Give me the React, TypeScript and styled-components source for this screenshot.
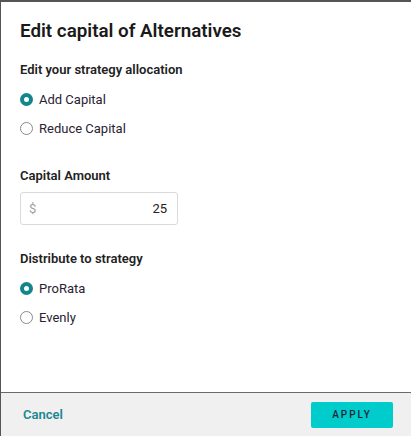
import React, { useState } from 'react';
import styled, { createGlobalStyle } from 'styled-components';

const GlobalStyle = createGlobalStyle`
  html, body {
    margin: 0;
    padding: 0;
    background: #555;
    font-family: Roboto, "Liberation Sans", Arial, sans-serif;
  }
  * {
    box-sizing: border-box;
  }
`;

const Dialog = styled.div`
  display: flex;
  flex-direction: column;
  margin: 2px 0 0 1px;
  height: calc(100vh - 2px);
  background: #fff;
`;

const Body = styled.div`
  flex: 1;
  padding: 18px 19px 0 19px;
`;

const Title = styled.h1`
  margin: 0;
  font-size: 18.8px;
  line-height: 22px;
  font-weight: 600;
  color: #1a1a1a;
`;

const Section = styled.section<{ $top: number }>`
  margin-top: ${(p) => p.$top}px;
`;

const Label = styled.div`
  font-size: 13px;
  line-height: 16px;
  font-weight: 600;
  color: #222;
`;

const RadioList = styled.div`
  display: flex;
  flex-direction: column;
  margin-top: 7px;
`;

const RadioRow = styled.label`
  display: flex;
  align-items: center;
  gap: 6px;
  height: 29px;
  font-size: 13px;
  color: #2a2233;
  cursor: pointer;
`;

const Dot = styled.span<{ $checked: boolean }>`
  width: 13px;
  height: 13px;
  border-radius: 50%;
  flex-shrink: 0;
  background: #fff;
  border: ${(p) => (p.$checked ? '4px solid #12868c' : '1px solid #8a8a8a')};
`;

const InputBox = styled.div`
  display: flex;
  align-items: center;
  justify-content: space-between;
  width: 158px;
  height: 33px;
  margin-top: 8px;
  padding: 0 10px 0 8px;
  border: 1px solid #dadada;
  border-radius: 3px;
  font-size: 13px;
`;

const Prefix = styled.span`
  color: #a0a0a0;
`;

const Amount = styled.span`
  color: #222;
`;

const Footer = styled.footer`
  display: flex;
  align-items: center;
  justify-content: space-between;
  height: 44px;
  padding: 0 18px 0 22px;
  background: #f0f0f0;
  border-top: 1px solid #6a6a6a;
`;

const Cancel = styled.button`
  border: none;
  background: none;
  padding: 0;
  font-family: inherit;
  font-size: 13px;
  font-weight: 600;
  color: #1a8794;
  cursor: pointer;
`;

const Apply = styled.button`
  width: 82px;
  height: 26px;
  border: none;
  border-radius: 2px;
  background: #00cccc;
  font-family: inherit;
  font-size: 10px;
  font-weight: 500;
  letter-spacing: 2px;
  color: #1b2636;
  cursor: pointer;
`;

type RadioProps = { label: string; checked: boolean; onSelect: () => void };

const Radio = ({ label, checked, onSelect }: RadioProps) => (
  <RadioRow onClick={onSelect}>
    <Dot $checked={checked} />
    {label}
  </RadioRow>
);

const App = () => {
  const [mode, setMode] = useState('add');
  const [dist, setDist] = useState('prorata');

  return (
    <>
      <GlobalStyle />
      <Dialog>
        <Body>
          <Title>Edit capital of Alternatives</Title>
          <Section $top={20}>
            <Label>Edit your strategy allocation</Label>
            <RadioList>
              <Radio label="Add Capital" checked={mode === 'add'} onSelect={() => setMode('add')} />
              <Radio label="Reduce Capital" checked={mode === 'reduce'} onSelect={() => setMode('reduce')} />
            </RadioList>
          </Section>
          <Section $top={25}>
            <Label>Capital Amount</Label>
            <InputBox>
              <Prefix>$</Prefix>
              <Amount>25</Amount>
            </InputBox>
          </Section>
          <Section $top={26}>
            <Label>Distribute to strategy</Label>
            <RadioList>
              <Radio label="ProRata" checked={dist === 'prorata'} onSelect={() => setDist('prorata')} />
              <Radio label="Evenly" checked={dist === 'evenly'} onSelect={() => setDist('evenly')} />
            </RadioList>
          </Section>
        </Body>
        <Footer>
          <Cancel>Cancel</Cancel>
          <Apply>APPLY</Apply>
        </Footer>
      </Dialog>
    </>
  );
};

export default App;
